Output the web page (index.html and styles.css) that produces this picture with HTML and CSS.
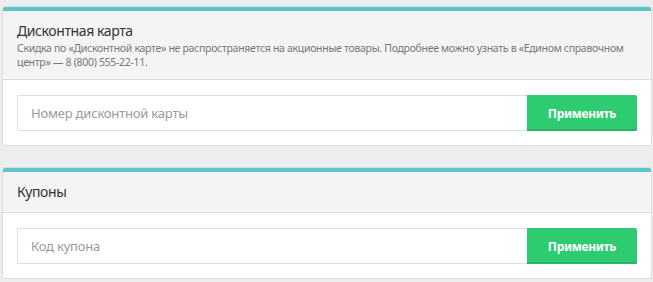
FILE: index.html
```html
<!DOCTYPE html>
<html lang="ru">
<head>
  <meta charset="UTF-8">
  <title>Скидки</title>
  <link rel="stylesheet" href="styles.css">
</head>
<body>
  <div class="card">
    <div class="card-header">
      <div class="card-title">Дисконтная карта</div>
      <div class="card-note">Скидка по «Дисконтной карте» не распространяется на акционные товары. Подробнее можно узнать в «Едином справочном центр» — 8 (800) 555-22-11.</div>
    </div>
    <div class="card-body">
      <input type="text" class="field" placeholder="Номер дисконтной карты">
      <button class="apply">Применить</button>
    </div>
  </div>

  <div class="card">
    <div class="card-header">
      <div class="card-title">Купоны</div>
    </div>
    <div class="card-body">
      <input type="text" class="field" placeholder="Код купона">
      <button class="apply">Применить</button>
    </div>
  </div>
</body>
</html>
```

FILE: styles.css
```css
body {
  margin: 0;
  padding: 6px 1px 0 2px;
  background-color: #ecedef;
  font-family: "Noto Sans", "Open Sans", sans-serif;
  color: #333;
}
.card {
  background-color: #fff;
  border: 1px solid #dcdde0;
  border-radius: 3px;
  overflow: hidden;
}
.card + .card {
  margin-top: 21px;
}
.card-header {
  background-color: #f4f4f4;
  border-top: 4px solid #5bc5c9;
  border-bottom: 1px solid #dcdcdc;
  padding: 10px 14px;
}
.card-title {
  font-size: 14px;
  line-height: 20px;
  letter-spacing: -0.4px;
}
.card-note {
  font-size: 10.5px;
  line-height: 14px;
  letter-spacing: -0.3px;
  color: #777;
}
.card-body {
  display: flex;
  padding: 15px 14px 14px;
}
.field {
  flex: 1;
  height: 36px;
  box-sizing: border-box;
  border: 1px solid #dedede;
  border-right: none;
  border-radius: 2px 0 0 2px;
  padding: 0 13px;
  font-family: inherit;
  font-size: 13px;
  letter-spacing: -0.2px;
  color: #333;
}
.field::placeholder {
  color: #999;
}
.apply {
  width: 110px;
  height: 36px;
  border: none;
  border-radius: 0 2px 2px 0;
  background-color: #2ecc71;
  box-shadow: inset 0 -2px 0 #27b463;
  color: #fff;
  font-family: inherit;
  font-size: 12px;
  font-weight: bold;
  letter-spacing: -0.3px;
}
```
